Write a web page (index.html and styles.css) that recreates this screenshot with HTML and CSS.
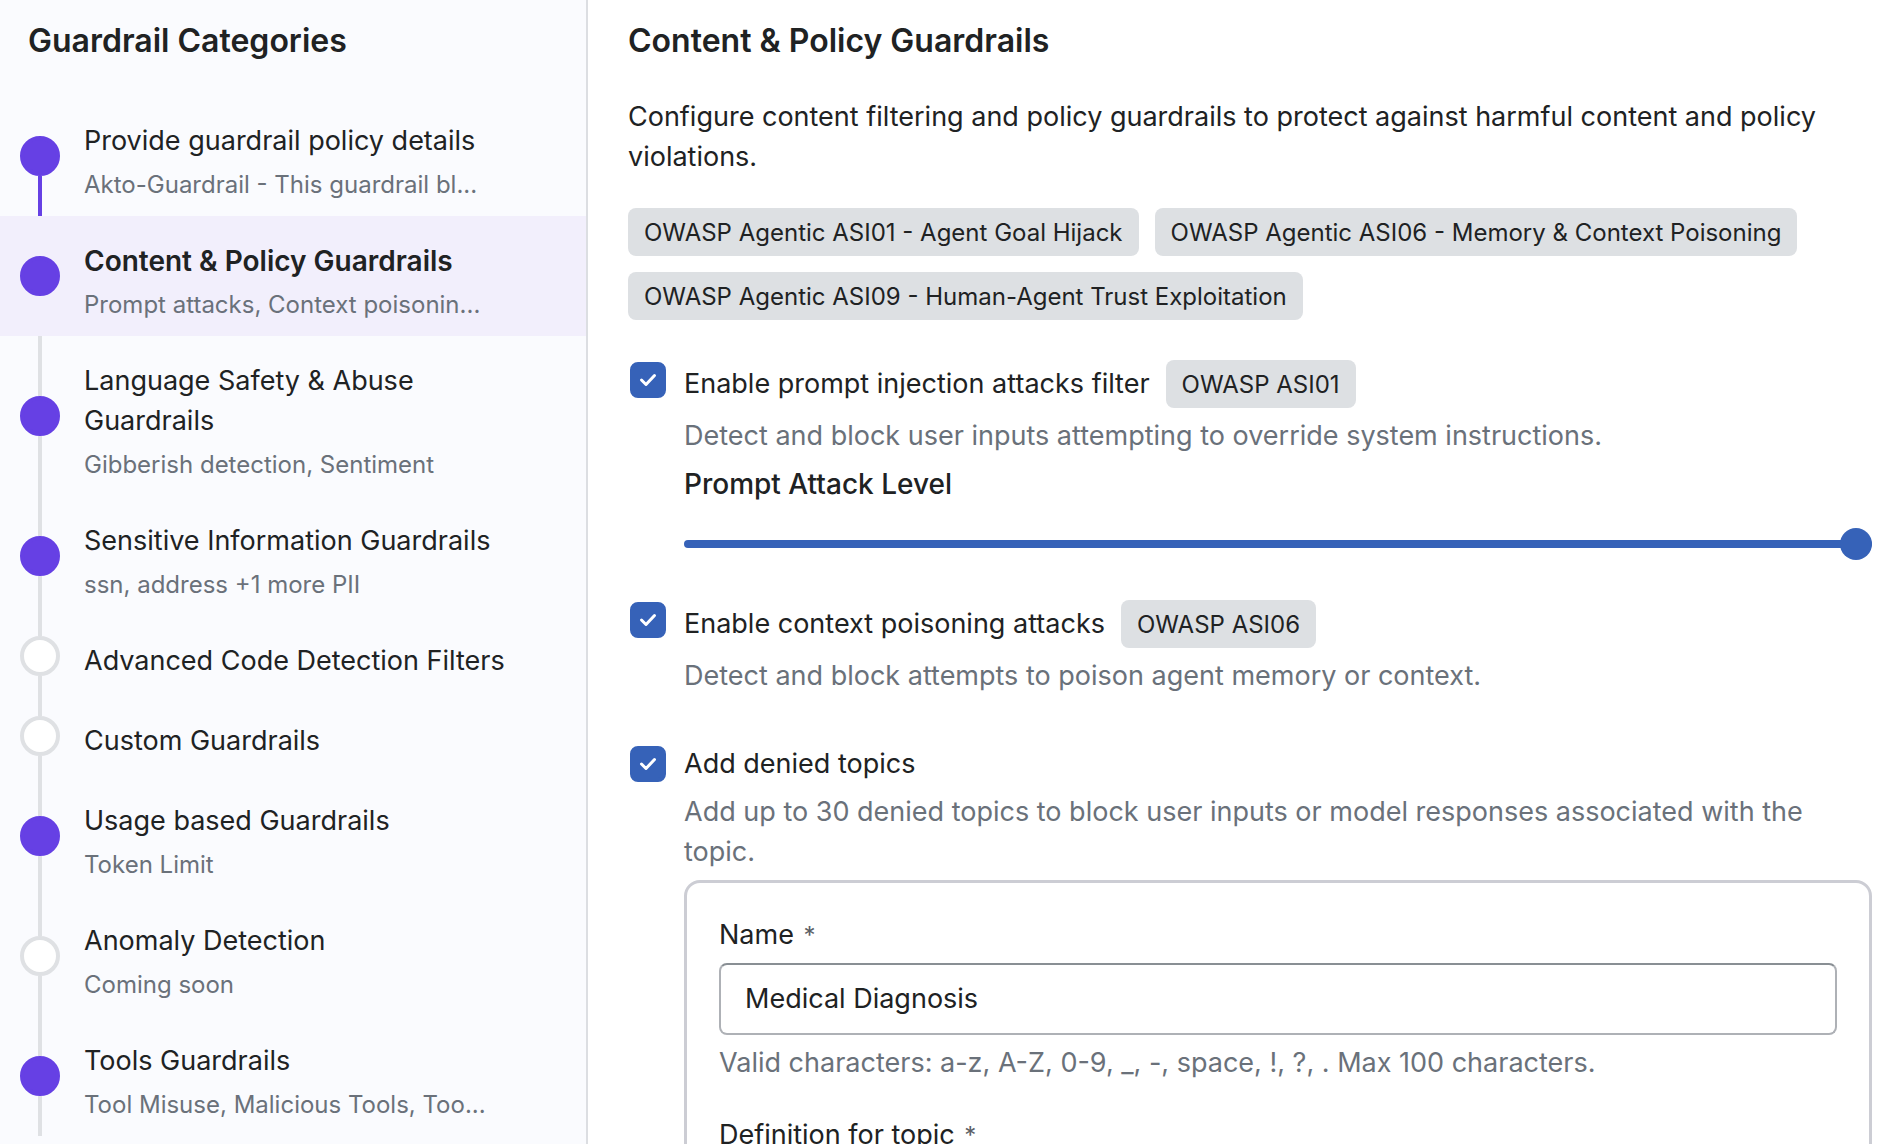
FILE: index.html
```html
<!DOCTYPE html>
<html lang="en">
<head>
    <meta charset="UTF-8">
    <meta name="viewport" content="width=device-width, initial-scale=1.0">
    <title>Content &amp; Policy Guardrails</title>
    <link rel="stylesheet" href="styles.css">
</head>
<body>

<div class="layout">
    <aside class="sidebar">
        <h2 class="heading">Guardrail Categories</h2>

        <ul class="steps">
            <li class="step">
                <div class="rail"><span class="line hidden"></span><span class="dot done"></span><span class="line done"></span></div>
                <div class="step-text">
                    <p class="step-title">Provide guardrail policy details</p>
                    <p class="step-sub">Akto-Guardrail - This guardrail bl...</p>
                </div>
            </li>
            <li class="step active">
                <div class="rail"><span class="line hidden"></span><span class="dot done"></span><span class="line hidden"></span></div>
                <div class="step-text">
                    <p class="step-title">Content &amp; Policy Guardrails</p>
                    <p class="step-sub">Prompt attacks, Context poisonin...</p>
                </div>
            </li>
            <li class="step">
                <div class="rail"><span class="line"></span><span class="dot done"></span><span class="line"></span></div>
                <div class="step-text">
                    <p class="step-title">Language Safety &amp; Abuse Guardrails</p>
                    <p class="step-sub">Gibberish detection, Sentiment</p>
                </div>
            </li>
            <li class="step">
                <div class="rail"><span class="line"></span><span class="dot done"></span><span class="line"></span></div>
                <div class="step-text">
                    <p class="step-title">Sensitive Information Guardrails</p>
                    <p class="step-sub">ssn, address +1 more PII</p>
                </div>
            </li>
            <li class="step">
                <div class="rail"><span class="line"></span><span class="dot"></span><span class="line"></span></div>
                <div class="step-text">
                    <p class="step-title">Advanced Code Detection Filters</p>
                </div>
            </li>
            <li class="step">
                <div class="rail"><span class="line"></span><span class="dot"></span><span class="line"></span></div>
                <div class="step-text">
                    <p class="step-title">Custom Guardrails</p>
                </div>
            </li>
            <li class="step">
                <div class="rail"><span class="line"></span><span class="dot done"></span><span class="line"></span></div>
                <div class="step-text">
                    <p class="step-title">Usage based Guardrails</p>
                    <p class="step-sub">Token Limit</p>
                </div>
            </li>
            <li class="step">
                <div class="rail"><span class="line"></span><span class="dot"></span><span class="line"></span></div>
                <div class="step-text">
                    <p class="step-title">Anomaly Detection</p>
                    <p class="step-sub">Coming soon</p>
                </div>
            </li>
            <li class="step">
                <div class="rail"><span class="line"></span><span class="dot done"></span><span class="line"></span></div>
                <div class="step-text">
                    <p class="step-title">Tools Guardrails</p>
                    <p class="step-sub">Tool Misuse, Malicious Tools, Too...</p>
                </div>
            </li>
        </ul>
    </aside>

    <main class="content">
        <h1 class="heading">Content &amp; Policy Guardrails</h1>
        <p class="intro">Configure content filtering and policy guardrails to protect against harmful content and policy violations.</p>

        <div class="tags">
            <span class="tag">OWASP Agentic ASI01 - Agent Goal Hijack</span>
            <span class="tag">OWASP Agentic ASI06 - Memory &amp; Context Poisoning</span>
            <span class="tag">OWASP Agentic ASI09 - Human-Agent Trust Exploitation</span>
        </div>

        <section class="option">
            <span class="check">
                <input type="checkbox" id="promptAttacks" checked>
                <svg viewBox="0 0 36 36"><path d="M11.5 18l4.5 4.5 8.5-9"/></svg>
            </span>
            <div class="option-body">
                <div class="option-title">
                    <label for="promptAttacks">Enable prompt injection attacks filter</label>
                    <span class="tag">OWASP ASI01</span>
                </div>
                <p class="help">Detect and block user inputs attempting to override system instructions.</p>
                <label class="level-label" for="attackLevel">Prompt Attack Level</label>
                <input class="slider" type="range" id="attackLevel" min="0" max="2" value="2">
            </div>
        </section>

        <section class="option">
            <span class="check">
                <input type="checkbox" id="contextPoisoning" checked>
                <svg viewBox="0 0 36 36"><path d="M11.5 18l4.5 4.5 8.5-9"/></svg>
            </span>
            <div class="option-body">
                <div class="option-title">
                    <label for="contextPoisoning">Enable context poisoning attacks</label>
                    <span class="tag">OWASP ASI06</span>
                </div>
                <p class="help">Detect and block attempts to poison agent memory or context.</p>
            </div>
        </section>

        <section class="option plain">
            <span class="check">
                <input type="checkbox" id="deniedTopics" checked>
                <svg viewBox="0 0 36 36"><path d="M11.5 18l4.5 4.5 8.5-9"/></svg>
            </span>
            <div class="option-body">
                <div class="option-title">
                    <label for="deniedTopics">Add denied topics</label>
                </div>
                <p class="help">Add up to 30 denied topics to block user inputs or model responses associated with the topic.</p>
                <div class="card">
                    <div class="field">
                        <label for="topicName">Name <span class="required">*</span></label>
                        <input type="text" id="topicName" value="Medical Diagnosis">
                        <p class="help">Valid characters: a-z, A-Z, 0-9, _, -, space, !, ?, . Max 100 characters.</p>
                    </div>
                    <div class="field">
                        <label for="topicDefinition">Definition for topic <span class="required">*</span></label>
                        <textarea id="topicDefinition" rows="3"></textarea>
                    </div>
                </div>
            </div>
        </section>
    </main>
</div>

</body>
</html>
```

FILE: styles.css
```css
* {
    margin: 0;
    padding: 0;
    box-sizing: border-box;
}

body {
    font-family: Inter, "Liberation Sans", sans-serif;
    font-size: 27px;
    line-height: 40px;
    color: #202223;
    background-color: #fff;
}

.layout {
    display: flex;
    height: 100vh;
    overflow: hidden;
}

.heading {
    font-size: 32px;
    line-height: 40px;
    font-weight: 600;
}

/* Sidebar */
.sidebar {
    flex: 0 0 588px;
    padding-top: 21px;
    background-color: #fafbfe;
    border-right: 2px solid #dcdee2;
}

.sidebar .heading {
    padding: 0 28px;
    margin-bottom: 35px;
}

.steps {
    list-style: none;
}

.step {
    display: flex;
    gap: 24px;
    padding: 0 48px 0 20px;
}

.step.active {
    background-color: #f2effc;
}

.step.active .step-title {
    font-size: 28px;
    font-weight: 600;
}

.rail {
    flex: 0 0 40px;
    display: flex;
    flex-direction: column;
    align-items: center;
}

.line {
    flex: 1;
    width: 4px;
    background-color: #dfe1e4;
}

.line.done {
    background-color: #6640e4;
}

.line.hidden {
    visibility: hidden;
}

.dot {
    width: 40px;
    height: 40px;
    border: 4px solid #dfe1e4;
    border-radius: 50%;
    background-color: #fff;
}

.dot.done {
    border-color: #6640e4;
    background-color: #6640e4;
}

.step-text {
    flex: 1;
    padding: 25px 0 15px;
}

.step-sub {
    margin-top: 8px;
    font-size: 24px;
    line-height: 32px;
    color: #6a717a;
    white-space: nowrap;
}

/* Content */
.content {
    flex: 1;
    min-width: 0;
    padding: 21px 28px 0 40px;
}

.intro {
    margin: 36px 0 31px;
}

.tags {
    display: flex;
    flex-wrap: wrap;
    gap: 16px;
}

.tag {
    padding: 9px 16px 7px;
    border-radius: 8px;
    background-color: #dde0e3;
    font-size: 24px;
    line-height: 32px;
}

.option {
    display: flex;
    gap: 18px;
    margin-top: 40px;
    padding-left: 2px;
}

.option.plain {
    margin-top: 48px;
}

.check {
    flex: 0 0 36px;
    display: grid;
    align-self: flex-start;
    margin-top: 2px;
}

.check input,
.check svg {
    grid-area: 1 / 1;
    width: 36px;
    height: 36px;
}

.check input {
    appearance: none;
    border: 4px solid #8c9196;
    border-radius: 8px;
}

.check input:checked {
    border-color: #3662b8;
    background-color: #3662b8;
}

.check svg {
    fill: none;
    stroke: #fff;
    stroke-width: 3;
    stroke-linecap: round;
    stroke-linejoin: round;
    pointer-events: none;
}

.option-body {
    flex: 1;
    min-width: 0;
}

.option-title {
    display: flex;
    align-items: center;
    gap: 16px;
    margin-bottom: 8px;
}

.help {
    color: #6a717a;
}

.level-label {
    display: block;
    margin: 8px 0 24px;
    font-size: 28px;
    font-weight: 500;
}

.slider {
    appearance: none;
    display: block;
    width: 100%;
    height: 32px;
    background: transparent;
}

.slider::-webkit-slider-runnable-track {
    height: 8px;
    border-radius: 4px;
    background-color: #3662b8;
}

.slider::-webkit-slider-thumb {
    appearance: none;
    width: 32px;
    height: 32px;
    margin-top: -12px;
    border-radius: 50%;
    background-color: #3662b8;
}

.card {
    display: flex;
    flex-direction: column;
    gap: 32px;
    margin-top: 8px;
    padding: 32px;
    border: 3px solid #cccdd4;
    border-radius: 16px;
}

.field {
    display: flex;
    flex-direction: column;
    gap: 8px;
}

.required {
    margin-left: 2px;
    font-size: 24px;
    line-height: 1;
    color: #5c6066;
}

.field input,
.field textarea {
    width: 100%;
    padding: 14px 24px;
    border: 2px solid #aeb1b6;
    border-top-color: #898f94;
    border-radius: 8px;
    background-color: #fff;
    font: inherit;
    color: inherit;
    resize: none;
}
```
